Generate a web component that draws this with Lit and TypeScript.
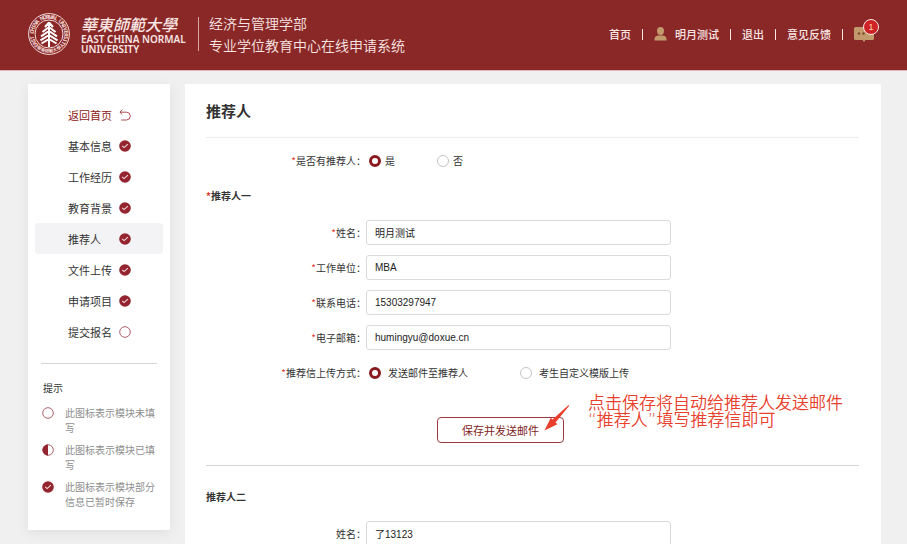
import { LitElement, html, css, svg } from "lit";
import { customElement, property } from "lit/decorators.js";

type Status = "back" | "done" | "half" | "empty";

const EMBLEM_CHARS = "EAST CHINA NORMAL UNIVERSITY";

@customElement("status-icon")
class StatusIcon extends LitElement {
  @property() status: Status = "empty";

  static styles = css`
    :host { display: block; width: 12px; height: 12px; }
    svg { display: block; }
  `;

  render() {
    const ring = svg`<circle cx="6" cy="6" r="5.3" fill="none" stroke="#a8505c" stroke-width="0.9"/>`;
    const shapes = {
      back: svg`<path d="M3.4 0.8 0.9 3.2 3.2 5.4M1 3.2H7.4a3.9 3.9 0 0 1 0 7.8H2.2" fill="none" stroke="#a03a42" stroke-width="0.9"/>`,
      done: svg`<circle cx="6" cy="6" r="5.8" fill="#94242f"/><path d="M3.200 5.800 5.100 7.600 8.900 4.100" fill="none" stroke="#f6dcdc" stroke-width="1.1"/>`,
      half: svg`${ring}<path d="M6 0.6a5.4 5.4 0 0 0 0 10.8z" fill="#94242f"/>`,
      empty: ring,
    };
    return html`<svg width="12" height="12" viewBox="0 0 12 12" aria-hidden="true">${shapes[this.status]}</svg>`;
  }
}

@customElement("site-header")
class SiteHeader extends LitElement {
  static styles = css`
    :host { display: block; background: #8a2828; border-bottom: 1px solid #dcb6b6; color: #f8e6e4; }
    .bar { display: flex; align-items: center; height: 70px; padding: 0 33px 2px 28px; box-sizing: border-box; }
    .emblem { display: block; flex: none; font-family: "Noto Sans", "Noto Sans CJK TC", sans-serif; }
    .name { margin-left: 11px; display: flex; flex-direction: column; width: 108px; flex: none; white-space: nowrap; }
    .zh { font: italic 500 16px/20px "Noto Sans CJK TC", sans-serif; }
    .en { font: 600 10px/10px "Noto Sans", sans-serif; }
    .rule { width: 1px; height: 34px; background: #d9a7a5; margin: 0 10px 0 9px; flex: none; }
    .system { font-size: 14px; line-height: 22px; font-weight: 350; white-space: nowrap; }
    nav { margin-left: auto; display: flex; align-items: center; gap: 11px; font-size: 11px; font-weight: 500; white-space: nowrap; }
    a { color: inherit; text-decoration: none; display: flex; align-items: center; gap: 8px; }
    .sep { width: 1px; height: 11px; background: #f8e6e4; }
    .messages { position: relative; }
    .badge {
      position: absolute; top: -7px; right: -5px; width: 16px; height: 16px; box-sizing: border-box;
      border: 1px solid #fbe9e5; border-radius: 50%; background: #cf2226; color: #ffd9b0;
      font: 9px/14px "Liberation Sans", sans-serif; text-align: center;
    }
  `;

  render() {
    const step = 264 / (EMBLEM_CHARS.length - 1);
    return html`
      <header class="bar">
        <svg class="emblem" width="42" height="42" viewBox="0 0 42 42" role="img" aria-label="East China Normal University">
          <circle cx="21" cy="21" r="20.4" fill="none" stroke="#f3d9d6" stroke-width="1"/>
          <circle cx="21" cy="21" r="14" fill="none" stroke="#f3d9d6" stroke-width="1"/>
          ${[...EMBLEM_CHARS].map((c, i) => svg`<text x="21" y="5.8" text-anchor="middle" font-size="5.5" font-weight="700" fill="#f3d9d6"
            transform="rotate(${-132 + i * step} 21 21)">${c}</text>`)}
          ${[..."華東師範大學"].map((c, i) => svg`<text x="21" y="39.700" text-anchor="middle" font-size="4.500" font-weight="700" fill="#f3d9d6"
            transform="rotate(${35 - i * 14} 21 21)">${c}</text>`)}
          <path d="M21 9v25M21 9.500l-4 4.500M21 9.500l4 4.500M21 14l-6.500 5M21 14l6.500 5M21 18l-8 5.400M21 18l8 5.400M21 22l-8.500 5.400M21 22l8.500 5.400M21 26l-7.500 4.500M21 26l7.500 4.500" fill="none" stroke="#fff" stroke-width="2"/>
        </svg>
        <div class="name">
          <span class="zh" lang="zh-Hant">華東師範大學</span>
          <span class="en">EAST CHINA NORMAL</span>
          <span class="en">UNIVERSITY</span>
        </div>
        <span class="rule"></span>
        <div class="system">经济与管理学部<br />专业学位教育中心在线申请系统</div>
        <nav>
          <a href="#home">首页</a>
          <span class="sep"></span>
          <a href="#me">
            <svg width="13" height="14" viewBox="0 0 13 14" aria-hidden="true" fill="#c39a6b">
              <ellipse cx="6.500" cy="4" rx="3.500" ry="4"/>
              <path d="M0.500 13.500V12c0-2.400 1.800-3.600 4-3.600h4c2.200 0 4 1.200 4 3.600v1.500z"/>
            </svg>
            明月测试</a>
          <span class="sep"></span>
          <a href="#logout">退出</a>
          <span class="sep"></span>
          <a href="#feedback">意见反馈</a>
          <span class="sep"></span>
          <a class="messages" href="#messages" aria-label="消息">
            <svg width="20" height="16" viewBox="0 0 20 16" aria-hidden="true">
              <path d="M1.500 1h17a1.500 1.500 0 0 1 1.500 1.500v10a1.500 1.500 0 0 1-1.500 1.500h-7L10 16l-1.500-2h-7A1.500 1.500 0 0 1 0 12.500v-10A1.500 1.500 0 0 1 1.500 1z" fill="#c39a6b"/>
              <g fill="#7a4a30"><circle cx="5" cy="7.500" r="1.200"/><circle cx="9.500" cy="7.500" r="1.200"/></g>
            </svg>
            <span class="badge">1</span>
          </a>
        </nav>
      </header>
    `;
  }
}

@customElement("side-menu")
class SideMenu extends LitElement {
  static styles = css`
    :host { display: block; background: #fff; padding: 15px 7px 21px; box-shadow: 0 3px 12px rgba(0, 0, 0, 0.07); color: #333; }
    a {
      display: grid; grid-template-columns: 45px 12px; column-gap: 6px; align-items: center; height: 31px;
      padding-left: 33px; border-radius: 4px; font-size: 11px; color: inherit; text-decoration: none; white-space: nowrap;
    }
    .back { color: #8f2020; }
    .active { background: #f3f3f6; }
    hr { border: 0; border-top: 1px solid #d6d6d6; margin: 16px 6px; }
    h2 { margin: 0 0 10px 8px; font-size: 10px; line-height: 15px; font-weight: 400; }
    ul { list-style: none; margin: 0 0 0 7px; padding: 0; display: grid; gap: 7px; }
    li { display: grid; grid-template-columns: 12px 92px; column-gap: 11px; font-size: 10px; line-height: 15px; color: #8e8e8e; }
    li status-icon { margin-top: 2px; }
  `;

  private items: [string, Status][] = [
    ["返回首页", "back"], ["基本信息", "done"], ["工作经历", "done"], ["教育背景", "done"],
    ["推荐人", "done"], ["文件上传", "done"], ["申请项目", "done"], ["提交报名", "empty"],
  ];

  private hints: [string, Status][] = [
    ["此图标表示模块未填写", "empty"], ["此图标表示模块已填写", "half"], ["此图标表示模块部分信息已暂时保存", "done"],
  ];

  render() {
    return html`
      <nav>
        ${this.items.map(([label, status]) => html`
          <a href="#" class=${status === "back" ? "back" : label === "推荐人" ? "active" : ""}>
            <span>${label}</span><status-icon .status=${status}></status-icon>
          </a>`)}
      </nav>
      <hr />
      <h2>提示</h2>
      <ul>
        ${this.hints.map(([text, status]) => html`<li><status-icon .status=${status}></status-icon><span>${text}</span></li>`)}
      </ul>
    `;
  }
}

@customElement("referee-form")
class RefereeForm extends LitElement {
  static styles = css`
    :host { display: block; background: #fff; padding: 0 22px 24px 21px; color: #333; font-size: 10px; }
    h1 { margin: 0; font-size: 15px; line-height: 53px; font-weight: 700; border-bottom: 1px solid #ececec; }
    h2 { margin: 0; font-size: 10px; line-height: 20px; font-weight: 700; }
    .row { display: grid; grid-template-columns: 160px minmax(0, 305px); align-items: center; min-height: 25px; white-space: nowrap; }
    .caption { text-align: right; }
    .star { color: #e0382e; }
    .rows { display: grid; gap: 10px; margin-top: 14px; }
    .first { margin-top: 10px; margin-bottom: 13px; }
    .text {
      box-sizing: border-box; width: 100%; height: 25px; border: 1px solid #dadada; border-radius: 3px; padding: 0 8px;
      font: 10px "Liberation Sans", "Noto Sans CJK SC", sans-serif; color: #222; background: #fff;
    }
    .options { display: flex; padding-left: 3px; }
    .option { display: flex; align-items: center; gap: 4px; min-width: 68px; }
    .wide .option { gap: 7px; min-width: 151px; }
    .radio { appearance: none; box-sizing: border-box; width: 12px; height: 12px; margin: 0; border: 1px solid #c4c4c4; border-radius: 50%; background: #fff; }
    .radio:checked { border: 3px solid #8b1a1f; }
    .actions { display: flex; align-items: flex-start; gap: 24px; margin-top: 10px; padding-left: 231px; }
    .save-wrap { position: relative; margin-top: 22px; flex: none; }
    .save { display: block; width: 127px; height: 26px; border: 1px solid #9b3a3e; border-radius: 4px; background: #fff; color: #7f1d1d; padding: 0; font: 11px "Noto Sans CJK SC", sans-serif; }
    .arrow { position: absolute; left: 107px; top: -13px; }
    .note { margin: 0; font: 350 17px/17px "DejaVu Sans", "Noto Sans CJK SC", sans-serif; color: #e8402c; white-space: nowrap; }
    .divider { border: 0; border-top: 1px solid #d4d4d4; margin: 22px 0 21px; }
  `;

  private field(id: string, label: string, value: string, required = true) {
    return html`<div class="row">
      <label class="caption" for=${id}>${required ? html`<span class="star">*</span>` : ""}${label}：</label>
      <input class="text" id=${id} type="text" .value=${value} />
    </div>`;
  }

  private choice(name: string, label: string, options: string[], kind: string) {
    return html`<div class="row ${kind}" role="radiogroup" aria-labelledby=${name}>
      <span class="caption" id=${name}><span class="star">*</span>${label}：</span>
      <div class="options">
        ${options.map((o, i) => html`<label class="option"><input class="radio" type="radio" name=${name} ?checked=${i === 0} />${o}</label>`)}
      </div>
    </div>`;
  }

  render() {
    return html`
      <h1>推荐人</h1>
      ${this.choice("has-referee", "是否有推荐人", ["是", "否"], "first")}
      <h2><span class="star">*</span>推荐人一</h2>
      <div class="rows">
        ${this.field("name1", "姓名", "明月测试")}
        ${this.field("company1", "工作单位", "MBA")}
        ${this.field("phone1", "联系电话", "15303297947")}
        ${this.field("mail1", "电子邮箱", "humingyu@doxue.cn")}
        ${this.choice("upload", "推荐信上传方式", ["发送邮件至推荐人", "考生自定义模版上传"], "wide")}
      </div>
      <div class="actions">
        <div class="save-wrap">
          <button class="save" type="button">保存并发送邮件</button>
          <svg class="arrow" width="26" height="28" viewBox="0 0 26 28" aria-hidden="true">
            <path d="M24.600 1 8.500 15.400 6.800 13.800 0.500 26.500 13.400 20.200 11.500 18.400 25.200 1.700z" fill="#e8402c"/>
          </svg>
        </div>
        <p class="note">点击保存将自动给推荐人发送邮件<br />“推荐人”填写推荐信即可</p>
      </div>
      <hr class="divider" />
      <h2>推荐人二</h2>
      <div class="rows">${this.field("name2", "姓名", "了13123", false)}</div>
    `;
  }
}

@customElement("app-root")
class AppRoot extends LitElement {
  static styles = css`
    :host { display: block; height: 100vh; overflow-y: auto; scrollbar-width: none; background: #f0f0f0; font-family: "Noto Sans CJK SC", sans-serif; }
    .page { display: grid; grid-template-columns: 142px minmax(0, 1fr); column-gap: 15px; align-items: start; padding: 13px 26px 0 28px; }
  `;

  render() {
    return html`
      <site-header></site-header>
      <main class="page">
        <side-menu></side-menu>
        <referee-form></referee-form>
      </main>
    `;
  }
}
